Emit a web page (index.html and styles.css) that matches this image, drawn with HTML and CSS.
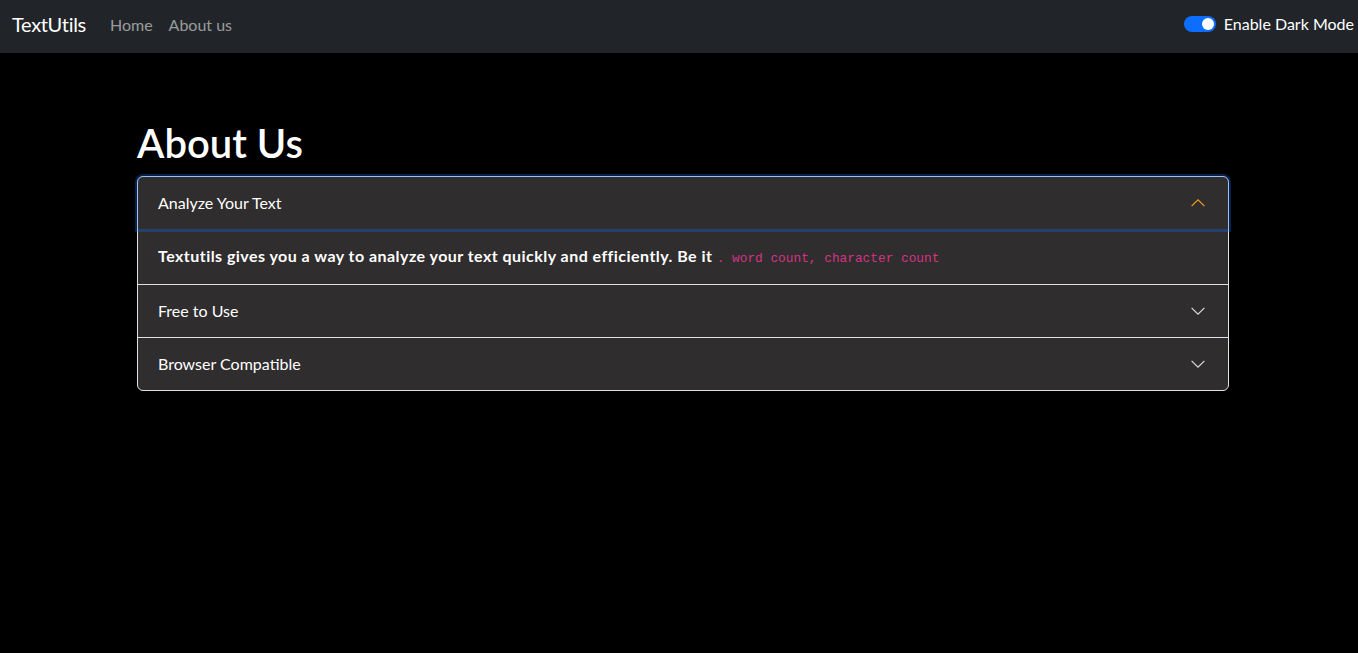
FILE: index.html
```html
<!DOCTYPE html>
<html>
<head>
<meta charset="utf-8">
<link rel="stylesheet" href="styles.css">
</head>
<body>
<nav class="navbar">
  <a class="brand">TextUtils</a>
  <ul class="nav">
    <li><a class="nav-link">Home</a></li>
    <li><a class="nav-link">About us</a></li>
  </ul>
  <div class="switch-wrap">
    <span class="switch"><span class="knob"></span></span>
    <span class="switch-label">Enable Dark Mode</span>
  </div>
</nav>
<main class="container">
  <h1 class="title">About Us</h1>
  <div class="accordion">
    <div class="item">
      <div class="head head-open">
        <span>Analyze Your Text</span>
        <svg class="chev chev-open" viewBox="0 0 16 16" width="16" height="16"><path d="M1.6 11.2 8 4.8l6.4 6.4" fill="none" stroke="currentColor" stroke-width="1.2"/></svg>
      </div>
      <div class="body"><strong>Textutils gives you a way to analyze your text quickly and efficiently. Be it <code>. word count, character count</code></strong></div>
    </div>
    <div class="item">
      <div class="head">
        <span>Free to Use</span>
        <svg class="chev" viewBox="0 0 16 16" width="16" height="16"><path d="M1.6 4.8 8 11.2l6.4-6.4" fill="none" stroke="currentColor" stroke-width="1.2"/></svg>
      </div>
    </div>
    <div class="item">
      <div class="head">
        <span>Browser Compatible</span>
        <svg class="chev" viewBox="0 0 16 16" width="16" height="16"><path d="M1.6 4.8 8 11.2l6.4-6.4" fill="none" stroke="currentColor" stroke-width="1.2"/></svg>
      </div>
    </div>
  </div>
</main>
</body>
</html>
```
FILE: styles.css
```css
* { box-sizing: border-box; }
html, body { margin: 0; padding: 0; }
body {
  background: #000;
  color: #fff;
  font-family: Lato, "Noto Sans", sans-serif;
  font-size: 16px;
  line-height: 1.5;
  min-height: 653px;
}
.navbar {
  height: 53px;
  background: #212529;
  display: flex;
  align-items: center;
  padding: 0 4px 0 12px;
}
.brand {
  font-size: 20px;
  letter-spacing: -0.3px;
  color: #fff;
  margin-right: 16px;
  padding-bottom: 5px;
}
.nav {
  list-style: none;
  margin: 0;
  padding: 0 0 4px;
  display: flex;
  flex: 1;
}
.nav-link {
  display: block;
  padding: 0 8px;
  color: rgba(255,255,255,.55);
}
.switch-wrap {
  display: flex;
  align-items: center;
  gap: 8px;
  padding-bottom: 5px;
}
.switch {
  width: 32px;
  height: 16px;
  border-radius: 8px;
  background: #0d6efd;
  display: flex;
  align-items: center;
  justify-content: flex-end;
  padding-right: 2px;
}
.knob {
  width: 12px;
  height: 12px;
  border-radius: 50%;
  background: #fff;
}
.switch-label { color: #fff; }
.container {
  width: 1092px;
  margin: 0 0 0 137px;
  padding-top: 66px;
}
.title {
  font-size: 40px;
  font-weight: 600;
  line-height: 48px;
  margin: 0 0 9px;
}
.accordion {
  border: 1px solid #dee2e6;
  border-radius: 6px;
  background: #2f2d2e;
}
.item + .item { border-top: 1px solid #dee2e6; }
.head {
  height: 52px;
  padding: 0 20px;
  display: flex;
  align-items: center;
  justify-content: space-between;
}
.head-open {
  border-radius: 5px 5px 0 0;
  box-shadow: 0 0 0 3px rgba(13,110,253,.3);
  position: relative;
}
.chev { color: #dedad6; margin-right: 2px; }
.chev-open { color: #f39c1b; }
.body {
  height: 55px;
  padding: 0 20px;
  display: flex;
  align-items: center;
}
.body strong { font-weight: 700; letter-spacing: 0.46px; }
code {
  font-family: "Liberation Mono", monospace;
  font-size: 12.8px;
  font-weight: 400;
  letter-spacing: 0;
  color: #d63384;
}
```
